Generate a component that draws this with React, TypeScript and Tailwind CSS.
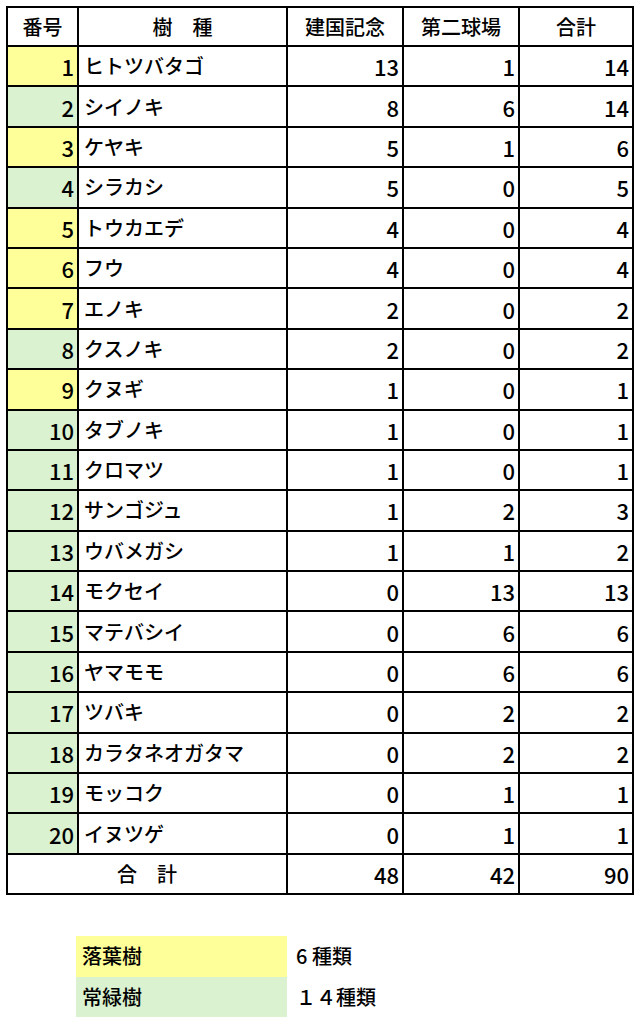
const YELLOW = "bg-[#ffff99]";
const GREEN = "bg-[#daf2d0]";

type Tree = { no: number; name: string; a: number; b: number; deciduous: boolean };

const trees: Tree[] = [
  { no: 1, name: "ヒトツバタゴ", a: 13, b: 1, deciduous: true },
  { no: 2, name: "シイノキ", a: 8, b: 6, deciduous: false },
  { no: 3, name: "ケヤキ", a: 5, b: 1, deciduous: true },
  { no: 4, name: "シラカシ", a: 5, b: 0, deciduous: false },
  { no: 5, name: "トウカエデ", a: 4, b: 0, deciduous: true },
  { no: 6, name: "フウ", a: 4, b: 0, deciduous: true },
  { no: 7, name: "エノキ", a: 2, b: 0, deciduous: true },
  { no: 8, name: "クスノキ", a: 2, b: 0, deciduous: false },
  { no: 9, name: "クヌギ", a: 1, b: 0, deciduous: true },
  { no: 10, name: "タブノキ", a: 1, b: 0, deciduous: false },
  { no: 11, name: "クロマツ", a: 1, b: 0, deciduous: false },
  { no: 12, name: "サンゴジュ", a: 1, b: 2, deciduous: false },
  { no: 13, name: "ウバメガシ", a: 1, b: 1, deciduous: false },
  { no: 14, name: "モクセイ", a: 0, b: 13, deciduous: false },
  { no: 15, name: "マテバシイ", a: 0, b: 6, deciduous: false },
  { no: 16, name: "ヤマモモ", a: 0, b: 6, deciduous: false },
  { no: 17, name: "ツバキ", a: 0, b: 2, deciduous: false },
  { no: 18, name: "カラタネオガタマ", a: 0, b: 2, deciduous: false },
  { no: 19, name: "モッコク", a: 0, b: 1, deciduous: false },
  { no: 20, name: "イヌツゲ", a: 0, b: 1, deciduous: false },
];

const cols = "grid grid-cols-[71px_209px_116px_116px_114px]";
const cell = "border-r-2 border-b-2 border-black flex items-center";
const num = `${cell} justify-end pr-[3px] text-[22px]`;

export default function App() {
  const totalA = trees.reduce((s, t) => s + t.a, 0);
  const totalB = trees.reduce((s, t) => s + t.b, 0);

  return (
    <div
      className="w-[640px] h-[1024px] bg-white text-black font-medium pt-[6px] pl-[6px]"
      style={{ fontFamily: '"Noto Sans CJK JP", "Noto Sans", sans-serif' }}
    >
      <div className="w-[628px] border-l-2 border-t-2 border-black leading-none">
        <div className={`${cols} h-[39px] text-[20px]`}>
          <div className={`${cell} justify-center`}>番号</div>
          <div className={`${cell} justify-center`}>樹　種</div>
          <div className={`${cell} justify-center`}>建国記念</div>
          <div className={`${cell} justify-center`}>第二球場</div>
          <div className={`${cell} justify-center`}>合計</div>
        </div>
        {trees.map((t) => (
          <div key={t.no} className={`${cols} h-[40.4px]`}>
            <div className={`${num} ${t.deciduous ? YELLOW : GREEN}`}>{t.no}</div>
            <div className={`${cell} pl-[5px] text-[20px]`}>{t.name}</div>
            <div className={num}>{t.a}</div>
            <div className={num}>{t.b}</div>
            <div className={num}>{t.a + t.b}</div>
          </div>
        ))}
        <div className={`${cols} h-[40px]`}>
          <div className={`${cell} col-span-2 justify-center text-[20px]`}>合　計</div>
          <div className={num}>{totalA}</div>
          <div className={num}>{totalB}</div>
          <div className={num}>{totalA + totalB}</div>
        </div>
      </div>

      <div className="mt-[41px] ml-[70px] text-[20px] leading-none">
        <div className="flex h-[41px]">
          <div className={`w-[211px] ${YELLOW} flex items-center pl-[6px]`}>落葉樹</div>
          <div className="flex items-center pl-[9px]">6 種類</div>
        </div>
        <div className="flex h-[40px]">
          <div className={`w-[211px] ${GREEN} flex items-center pl-[6px]`}>常緑樹</div>
          <div className="flex items-center pl-[9px]">１４種類</div>
        </div>
      </div>
    </div>
  );
}
